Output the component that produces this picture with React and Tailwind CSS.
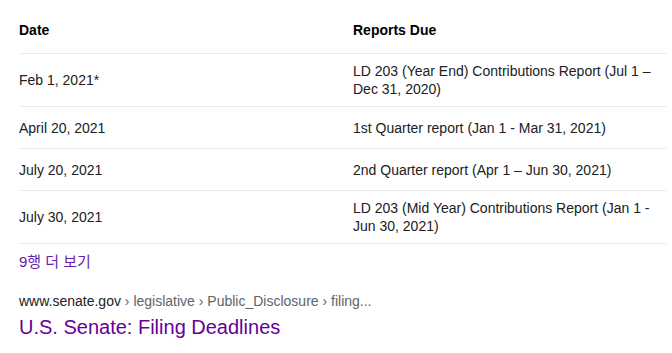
const ROWS = [
  { date: 'Feb 1, 2021*', report: 'LD 203 (Year End) Contributions Report (Jul 1 – Dec 31, 2020)' },
  { date: 'April 20, 2021', report: '1st Quarter report (Jan 1 - Mar 31, 2021)' },
  { date: 'July 20, 2021', report: '2nd Quarter report (Apr 1 – Jun 30, 2021)' },
  { date: 'July 30, 2021', report: 'LD 203 (Mid Year) Contributions Report (Jan 1 - Jun 30, 2021)' },
]

export default function App() {
  return (
    <div
      className="w-[672px] h-[353px] bg-white overflow-hidden text-[#202124]"
      style={{ fontFamily: '"Liberation Sans", Arial, "Noto Sans CJK KR", sans-serif' }}
    >
      <div className="ml-[19px] w-[648px]">
        {/* Header */}
        <div className="flex h-[54px] items-end pb-[14px] border-b border-[#ebebeb] text-[14px] leading-[18px] font-bold text-black">
          <div className="w-[334px]">Date</div>
          <div className="flex-1">Reports Due</div>
        </div>

        {/* Rows */}
        {ROWS.map((row) => (
          <div
            key={row.date}
            className="flex items-center min-h-[42px] py-[8px] border-b border-[#ebebeb] text-[14px] leading-[18px]"
          >
            <div className="w-[334px]">{row.date}</div>
            <div className="flex-1 pr-[6px]">{row.report}</div>
          </div>
        ))}

        <div className="mt-[9px] text-[15px] leading-[18px] text-[#681da8]">9행 더 보기</div>

        <div className="mt-[21px] text-[14px] leading-[18px] whitespace-nowrap">
          <span className="text-[#202124]">www.senate.gov</span>
          <span className="text-[#5f6368]"> › legislative › Public_Disclosure › filing...</span>
        </div>
        <div className="mt-[4px] text-[20px] leading-[26px] text-[#660099]">U.S. Senate: Filing Deadlines</div>
      </div>
    </div>
  )
}
